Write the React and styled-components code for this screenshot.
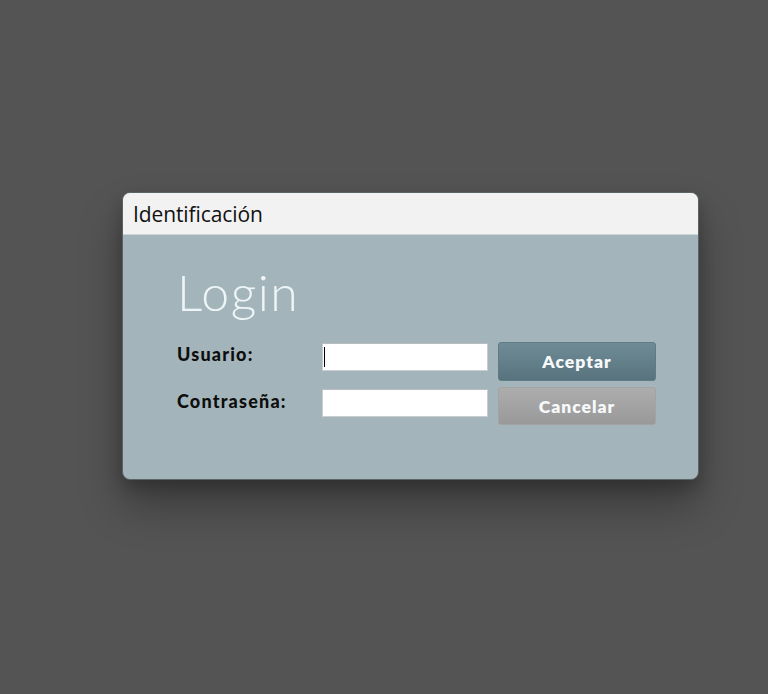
import React from "react";
import styled, { createGlobalStyle } from "styled-components";

const Global = createGlobalStyle`
  html, body { margin: 0; padding: 0; height: 100%; }
  body { background: #545454; }
  #root { height: 100%; }
`;

const Page = styled.div`
  width: 768px;
  height: 694px;
  background: #545454;
  display: flex;
  justify-content: flex-start;
  align-items: flex-start;
  padding: 192px 0 0 122px;
  box-sizing: border-box;
`;

const Window = styled.div`
  width: 577px;
  height: 288px;
  border-radius: 8px;
  border: 1px solid #5c6366;
  box-sizing: border-box;
  overflow: hidden;
  display: flex;
  flex-direction: column;
  background: #a3b5ba;
  box-shadow: 0 26px 44px rgba(0, 0, 0, 0.3), 0 8px 16px rgba(0, 0, 0, 0.2);
`;

const TitleBar = styled.div`
  height: 41px;
  background: #f2f2f2;
  border-bottom: 1px solid #cfd6d8;
  display: flex;
  align-items: center;
  padding-left: 10px;
  font-family: "Open Sans", "Noto Sans", sans-serif;
  font-size: 21px;
  letter-spacing: -0.1px;
  color: #111;
  flex-shrink: 0;
`;

const Body = styled.div`
  flex: 1;
  padding: 28px 0 0 54px;
  display: flex;
  flex-direction: column;
`;

const Heading = styled.h1`
  margin: 0;
  font-family: "Lato", sans-serif;
  font-weight: 300;
  font-size: 50px;
  line-height: 58px;
  letter-spacing: 1.5px;
  color: #eef5f7;
`;

const Form = styled.div`
  margin-top: 21px;
  display: grid;
  grid-template-columns: 135px 166px 158px;
  column-gap: 10px;
  row-gap: 6px;
  align-items: start;
`;

const Label = styled.label`
  font-family: "Lato", sans-serif;
  font-weight: 900;
  font-size: 18px;
  line-height: 20px;
  color: #0d0d0d;
  letter-spacing: 1.2px;
  white-space: nowrap;
  margin-top: ${(p) => p.$offset || 0}px;
`;

const Input = styled.input`
  display: block;
  width: 166px;
  height: 28px;
  box-sizing: border-box;
  border: 1px solid #c9cdcf;
  border-top-color: #b8bcbe;
  background: #fff;
  outline: none;
  padding: 0 1px;
  font-family: "Lato", sans-serif;
  font-size: 15px;
`;

const Caret = styled.span`
  position: absolute;
  left: 2px;
  top: 4px;
  width: 1px;
  height: 20px;
  background: #000;
`;

const InputWrap = styled.div`
  position: relative;
  height: 28px;
  margin-top: ${(p) => p.$offset || 0}px;
`;

const Button = styled.button`
  display: block;
  width: 158px;
  height: ${(p) => p.$h}px;
  box-sizing: border-box;
  border-radius: 3px;
  border: 1px solid ${(p) => (p.$primary ? "#5f7c86" : "#a3a3a3")};
  background: ${(p) =>
    p.$primary
      ? "linear-gradient(#6f8c96, #58737d)"
      : "linear-gradient(#adadad, #999999)"};
  color: #f7f9fa;
  font-family: "Lato", sans-serif;
  font-weight: 800;
  font-size: 17.5px;
  letter-spacing: 1px;
  padding: 0;
  cursor: pointer;
`;

export default function App() {
  return (
    <>
      <Global />
      <Page>
        <Window>
          <TitleBar>Identificación</TitleBar>
          <Body>
            <Heading>Login</Heading>
            <Form>
              <Label $offset={2}>Usuario:</Label>
              <InputWrap $offset={1}>
                <Input type="text" />
                <Caret />
              </InputWrap>
              <Button $primary $h={39}>Aceptar</Button>
              <Label $offset={4}>Contraseña:</Label>
              <InputWrap $offset={2}>
                <Input type="password" />
              </InputWrap>
              <Button $h={38}>Cancelar</Button>
            </Form>
          </Body>
        </Window>
      </Page>
    </>
  );
}
